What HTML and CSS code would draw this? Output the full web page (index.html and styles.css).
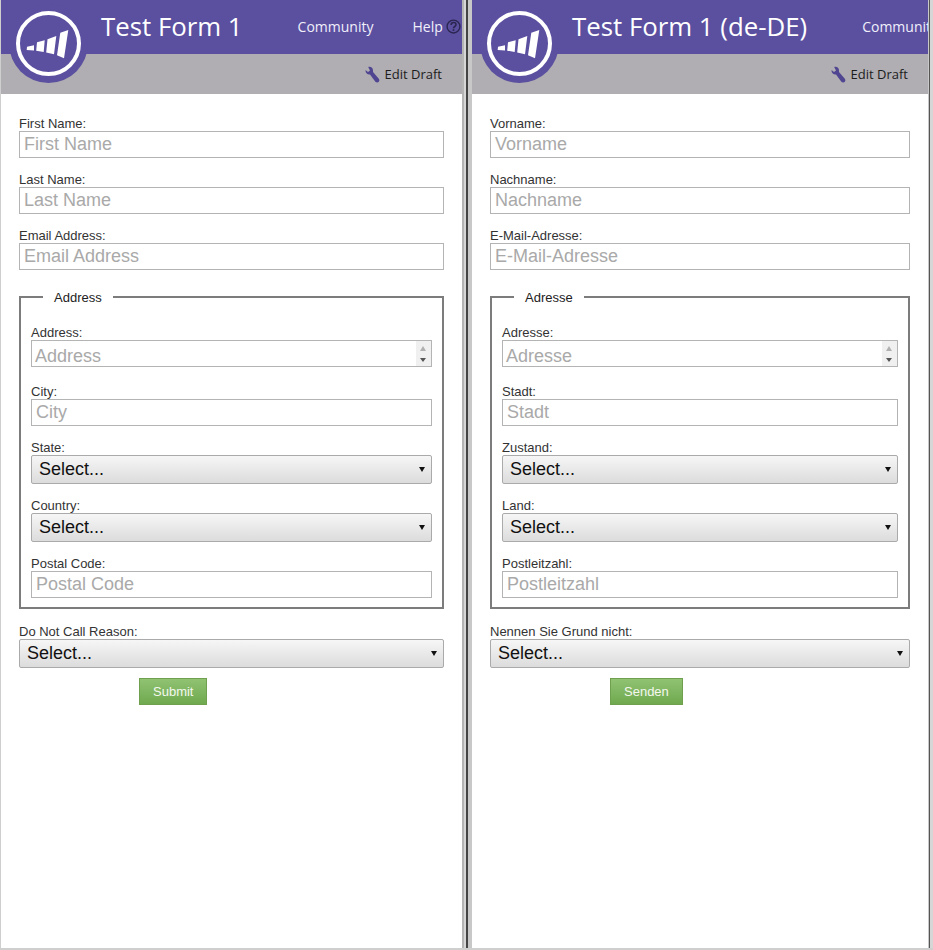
FILE: index.html
```html
<!DOCTYPE html>
<html lang="en">
<head>
  <meta charset="UTF-8">
  <title>Test Form 1</title>
  <link rel="stylesheet" href="styles.css">
</head>
<body>

<div class="split">

  <!-- left: default language -->
  <div class="panel panel-left">
    <div class="topbar">
      <svg class="logo" width="88" height="88" viewBox="0 0 88 88">
        <circle cx="48.5" cy="43.5" r="39.5" fill="#5b4fa0"/>
        <circle cx="48.5" cy="43.5" r="30.5" fill="none" stroke="#fff" stroke-width="4"/>
        <path fill="#fff" d="M27 46.7L34 45.2V50.6L26.700 50zM37 42.300L44.700 40.300 43.700 52.100 36.200 50.700zM47.500 39.200L56.300 36 54 54.200 46.200 52.400zM60.300 32.800L68.300 30 64 58.300 57 55.200z"/>
      </svg>
      <div class="title">Test Form 1</div>
      <a class="nav-link nav-first">Community</a>
      <a class="nav-link nav-help">Help</a>
      <svg class="help-icon" width="15" height="15" viewBox="0 0 14 14">
        <circle cx="7" cy="7" r="6" fill="none" stroke="#2b2650" stroke-width="1.300"/>
        <path fill="none" stroke="#2b2650" stroke-width="1.500" d="M4.800 5.500c0-3 4.500-3 4.500-.2 0 1.700-2.300 1.700-2.300 3.400"/>
        <rect x="6.200" y="9.500" width="1.600" height="1.600" fill="#2b2650"/>
      </svg>
    </div>
    <div class="subbar">
      <svg class="wrench" width="15" height="17" viewBox="0 0 15 17">
        <path fill="#4f4590" d="M.5 4L3 6 5 4.500 3.200 1C5.500.3 8 1.500 8 4.500V6L14 13C15 14.500 14 16.500 12 16.500 11 16.500 10.500 16 10 15.300L5 8.500C2.500 8.800.3 7 .5 4z"/>
      </svg>
      <span class="edit-draft">Edit Draft</span>
    </div>
    <form class="form">
      <div class="field"><label>First Name:</label><input type="text" placeholder="First Name"></div>
      <div class="field"><label>Last Name:</label><input type="text" placeholder="Last Name"></div>
      <div class="field"><label>Email Address:</label><input type="text" placeholder="Email Address"></div>

      <fieldset class="group">
        <legend>Address</legend>
        <div class="field field-area">
          <label>Address:</label>
          <div class="area-wrap"><textarea rows="1" placeholder="Address"></textarea><span class="spin"></span></div>
        </div>
        <div class="field"><label>City:</label><input type="text" placeholder="City"></div>
        <div class="field"><label>State:</label><div class="select-wrap"><select><option>Select...</option></select></div></div>
        <div class="field"><label>Country:</label><div class="select-wrap"><select><option>Select...</option></select></div></div>
        <div class="field"><label>Postal Code:</label><input type="text" placeholder="Postal Code"></div>
      </fieldset>

      <div class="field field-last"><label>Do Not Call Reason:</label><div class="select-wrap"><select><option>Select...</option></select></div></div>
      <button type="button" class="submit">Submit</button>
    </form>
  </div>

  <div class="divider"></div>

  <!-- right: de-DE -->
  <div class="panel panel-right">
    <div class="topbar">
      <svg class="logo" width="88" height="88" viewBox="0 0 88 88">
        <circle cx="48.5" cy="43.5" r="39.5" fill="#5b4fa0"/>
        <circle cx="48.5" cy="43.5" r="30.5" fill="none" stroke="#fff" stroke-width="4"/>
        <path fill="#fff" d="M27 46.7L34 45.2V50.6L26.700 50zM37 42.300L44.700 40.300 43.700 52.100 36.200 50.700zM47.500 39.200L56.300 36 54 54.200 46.200 52.400zM60.300 32.800L68.300 30 64 58.300 57 55.200z"/>
      </svg>
      <div class="title">Test Form 1 (de-DE)</div>
      <a class="nav-link nav-first">Community</a>
    </div>
    <div class="subbar">
      <svg class="wrench" width="15" height="17" viewBox="0 0 15 17">
        <path fill="#4f4590" d="M.5 4L3 6 5 4.500 3.200 1C5.500.3 8 1.500 8 4.500V6L14 13C15 14.500 14 16.500 12 16.500 11 16.500 10.500 16 10 15.300L5 8.500C2.500 8.800.3 7 .5 4z"/>
      </svg>
      <span class="edit-draft">Edit Draft</span>
    </div>
    <form class="form">
      <div class="field"><label>Vorname:</label><input type="text" placeholder="Vorname"></div>
      <div class="field"><label>Nachname:</label><input type="text" placeholder="Nachname"></div>
      <div class="field"><label>E-Mail-Adresse:</label><input type="text" placeholder="E-Mail-Adresse"></div>

      <fieldset class="group">
        <legend>Adresse</legend>
        <div class="field field-area">
          <label>Adresse:</label>
          <div class="area-wrap"><textarea rows="1" placeholder="Adresse"></textarea><span class="spin"></span></div>
        </div>
        <div class="field"><label>Stadt:</label><input type="text" placeholder="Stadt"></div>
        <div class="field"><label>Zustand:</label><div class="select-wrap"><select><option>Select...</option></select></div></div>
        <div class="field"><label>Land:</label><div class="select-wrap"><select><option>Select...</option></select></div></div>
        <div class="field"><label>Postleitzahl:</label><input type="text" placeholder="Postleitzahl"></div>
      </fieldset>

      <div class="field field-last"><label>Nennen Sie Grund nicht:</label><div class="select-wrap"><select><option>Select...</option></select></div></div>
      <button type="button" class="submit">Senden</button>
    </form>
  </div>

  <div class="divider-end"></div>

</div>

</body>
</html>
```

FILE: styles.css
```css
* {
  box-sizing: border-box;
}
html, body {
  height: 100%;
}
body {
  margin: 0;
  background: #cfcfcf;
  font-family: 'Liberation Sans', Arial, sans-serif;
  color: #222;
  overflow: hidden;
}
.split {
  display: flex;
  height: 948px;
  padding-left: 1px;
}
.panel {
  position: relative;
  background: #fff;
  overflow: hidden;
  flex: none;
}
.panel-left {
  width: 461px;
}
.panel-right {
  width: 456px;
}
.divider {
  flex: none;
  width: 10px;
  background: linear-gradient(to right, #b4b4b4 0 2px, #d6d6d6 2px 4px, #444 4px 6px, #c8c8c8 6px 10px);
}
.divider-end {
  flex: none;
  width: 5px;
  background: linear-gradient(to right, #c8c8c8 0 1px, #555 1px 2px, #d6d6d6 2px 5px);
}

/* header */
.topbar {
  height: 54px;
  padding-bottom: 2px;
  background: #5b4fa0;
  display: flex;
  align-items: center;
  white-space: nowrap;
  overflow: hidden;
}
.title {
  margin-left: 100px;
  font-family: 'Open Sans', sans-serif;
  font-size: 25.8px;
  color: #fff;
}
.nav-link {
  font-family: 'Open Sans', sans-serif;
  font-size: 14px;
  color: #f0effa;
}
.nav-first {
  margin-left: 55px;
}
.nav-help {
  margin-left: 39px;
}
.help-icon {
  margin-left: 3px;
  flex: none;
}
.logo {
  position: absolute;
  left: -1px;
  top: 0;
  z-index: 2;
}
.subbar {
  height: 40px;
  background: #b0aeb2;
  display: flex;
  align-items: center;
  justify-content: flex-end;
  padding-right: 20px;
}
.wrench {
  margin-right: 5px;
}
.edit-draft {
  font-family: 'Open Sans', sans-serif;
  font-size: 13px;
  color: #1c1c1c;
}

/* form */
.form {
  padding: 21px 18px 0;
}
.field {
  margin-bottom: 13px;
}
.field label {
  display: block;
  height: 16px;
  line-height: 18px;
  font-size: 13px;
  color: #333;
}
.field input, .field textarea {
  display: block;
  width: 100%;
  height: 27px;
  padding: 0 4px;
  border: 1px solid #b4b4b4;
  border-radius: 0;
  background: #fff;
  font-family: 'Liberation Sans', Arial, sans-serif;
  font-size: 18px;
  line-height: 24px;
  outline: none;
  resize: none;
  overflow: hidden;
}
.field input::placeholder, .field textarea::placeholder {
  color: #a9a9a9;
  opacity: 1;
}
.area-wrap {
  position: relative;
}
.field .area-wrap textarea {
  padding: 3px 3px 0;
}
.spin {
  position: absolute;
  right: 1px;
  top: 1px;
  bottom: 1px;
  width: 15px;
  background: #f0f0f0;
}
.spin::before, .spin::after {
  content: "";
  position: absolute;
  left: 4px;
  border-left: 3.500px solid transparent;
  border-right: 3.500px solid transparent;
}
.spin::before {
  top: 5px;
  border-bottom: 5px solid #b0b0b0;
}
.spin::after {
  bottom: 4px;
  border-top: 4px solid #555;
}
.select-wrap {
  position: relative;
}
.select-wrap select {
  display: block;
  width: 100%;
  height: 29px;
  padding: 0 7px 2px;
  border: 1px solid #aaa;
  border-radius: 2px;
  appearance: none;
  background: linear-gradient(to bottom, #f6f6f6, #dcdcdc);
  font-family: 'Liberation Sans', Arial, sans-serif;
  font-size: 18px;
  color: #111;
}
.select-wrap::after {
  content: "";
  position: absolute;
  right: 7px;
  top: 12px;
  border-left: 3px solid transparent;
  border-right: 3px solid transparent;
  border-top: 5px solid #111;
}
.group {
  margin: 19px 0 14px;
  padding: 19px 10px 0;
  min-width: 0;
  height: 320px;
  border: 2px solid #7c7c7c;
}
.group legend {
  margin-left: 12px;
  padding: 0 11px;
  height: 16px;
  font-size: 13px;
  line-height: 18px;
  color: #222;
}
.field-area {
  margin-bottom: 16px;
}
.field-last {
  margin-bottom: 10px;
}
.submit {
  display: block;
  margin-left: 120px;
  height: 27px;
  padding: 0 13px;
  border: 1px solid #6fa04e;
  border-radius: 0;
  background: linear-gradient(to bottom, #90c272, #6fa94f);
  font-family: 'Liberation Sans', Arial, sans-serif;
  font-size: 13px;
  color: #f4f8ef;
}
```
